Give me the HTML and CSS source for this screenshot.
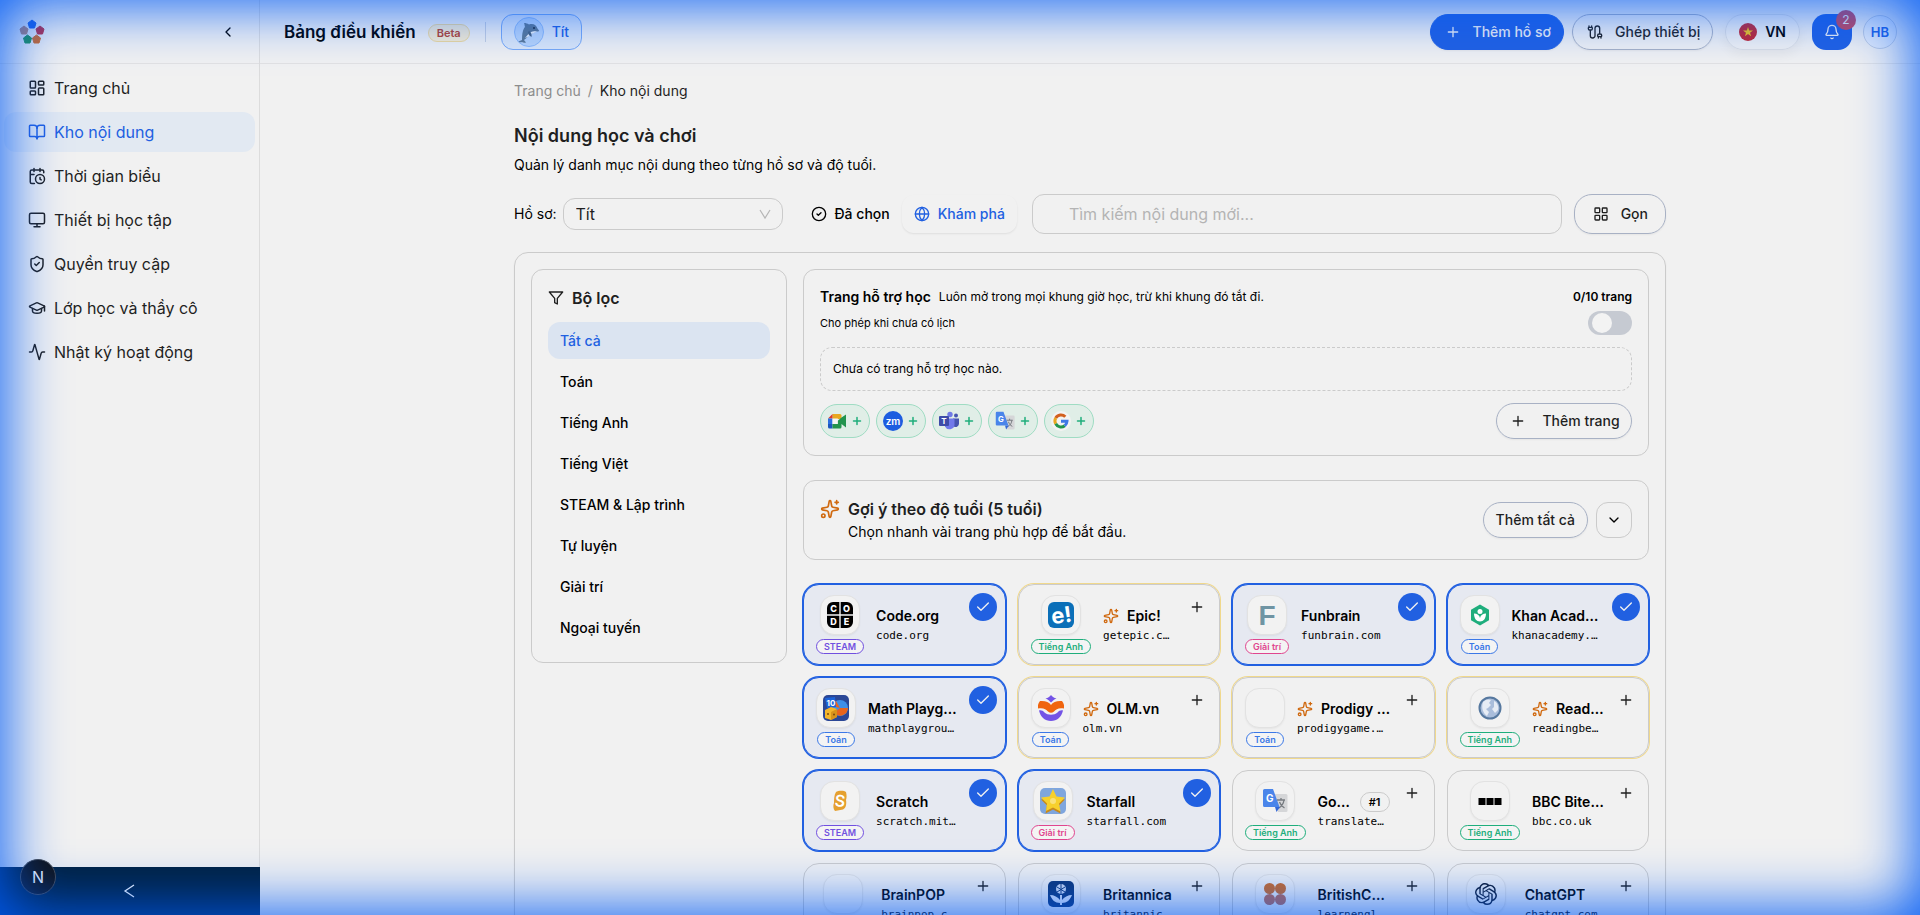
FILE: index.html
```html
<!DOCTYPE html>
<html lang="vi">
<head>
<meta charset="utf-8">
<meta name="viewport" content="width=device-width, initial-scale=1">
<title>Kho nội dung</title>
<link rel="stylesheet" href="styles.css">
</head>
<body>
<svg class="sprite" aria-hidden="true">
  <symbol id="dashboard" viewBox="0 0 24 24"><rect x="3" y="3" width="7" height="9" rx="1"/><rect x="14" y="3" width="7" height="5" rx="1"/><rect x="14" y="12" width="7" height="9" rx="1"/><rect x="3" y="16" width="7" height="5" rx="1"/></symbol>
  <symbol id="book" viewBox="0 0 24 24"><path d="M12 7v14"/><path d="M3 18a1 1 0 0 1-1-1V4a1 1 0 0 1 1-1h5a4 4 0 0 1 4 4 4 4 0 0 1 4-4h5a1 1 0 0 1 1 1v13a1 1 0 0 1-1 1h-6a3 3 0 0 0-3 3 3 3 0 0 0-3-3z"/></symbol>
  <symbol id="calendar" viewBox="0 0 24 24"><path d="M16 14v2.2l1.6 1M16 2v4M21 7.5V6a2 2 0 0 0-2-2H5a2 2 0 0 0-2 2v14a2 2 0 0 0 2 2h3.5M3 10h5M8 2v4"/><circle cx="16" cy="16" r="6"/></symbol>
  <symbol id="monitor" viewBox="0 0 24 24"><rect x="2" y="3" width="20" height="14" rx="2"/><path d="M8 21h8M12 17v4"/></symbol>
  <symbol id="shield" viewBox="0 0 24 24"><path d="M20 13c0 5-3.5 7.5-7.66 8.95a1 1 0 0 1-.67-.01C7.5 20.5 4 18 4 13V6a1 1 0 0 1 1-1c2 0 4.5-1.2 6.24-2.72a1.17 1.17 0 0 1 1.52 0C14.51 3.81 17 5 19 5a1 1 0 0 1 1 1z"/><path d="m9 12 2 2 4-4"/></symbol>
  <symbol id="cap" viewBox="0 0 24 24"><path d="M21.42 10.922a1 1 0 0 0-.019-1.838L12.83 5.18a2 2 0 0 0-1.66 0L2.6 9.08a1 1 0 0 0 0 1.832l8.57 3.908a2 2 0 0 0 1.66 0z"/><path d="M22 10v6M6 12.5V16a6 3 0 0 0 12 0v-3.5"/></symbol>
  <symbol id="activity" viewBox="0 0 24 24"><path d="M22 12h-2.48a2 2 0 0 0-1.93 1.46l-2.35 8.36a.25.25 0 0 1-.48 0L9.24 2.18a.25.25 0 0 0-.48 0l-2.35 8.36A2 2 0 0 1 4.49 12H2"/></symbol>
  <symbol id="sparkles" viewBox="0 0 24 24"><path d="M11.017 2.814a1 1 0 0 1 1.966 0l1.051 5.558a2 2 0 0 0 1.594 1.594l5.558 1.051a1 1 0 0 1 0 1.966l-5.558 1.051a2 2 0 0 0-1.594 1.594l-1.051 5.558a1 1 0 0 1-1.966 0l-1.051-5.558a2 2 0 0 0-1.594-1.594l-5.558-1.051a1 1 0 0 1 0-1.966l5.558-1.051a2 2 0 0 0 1.594-1.594zM20 2v4M22 4h-4"/><circle cx="4" cy="20" r="2"/></symbol>
  <symbol id="plus" viewBox="0 0 24 24"><path d="M5 12h14M12 5v14"/></symbol>
  <symbol id="check" viewBox="0 0 24 24"><path d="M20 6 9 17l-5-5"/></symbol>
  <symbol id="circle-check" viewBox="0 0 24 24"><circle cx="12" cy="12" r="10"/><path d="m9 12 2 2 4-4"/></symbol>
  <symbol id="globe" viewBox="0 0 24 24"><circle cx="12" cy="12" r="10"/><path d="M12 2a14.5 14.5 0 0 0 0 20 14.5 14.5 0 0 0 0-20M2 12h20"/></symbol>
  <symbol id="grid" viewBox="0 0 24 24"><rect x="3" y="3" width="7" height="7" rx="1"/><rect x="14" y="3" width="7" height="7" rx="1"/><rect x="14" y="14" width="7" height="7" rx="1"/><rect x="3" y="14" width="7" height="7" rx="1"/></symbol>
  <symbol id="funnel" viewBox="0 0 24 24"><path d="M22 3H2l8 9.46V19l4 2v-8.54z"/></symbol>
  <symbol id="down" viewBox="0 0 24 24"><path d="m6 9 6 6 6-6"/></symbol>
  <symbol id="left" viewBox="0 0 24 24"><path d="m15 18-6-6 6-6"/></symbol>
  <symbol id="bell" viewBox="0 0 24 24"><path d="M10.268 21a2 2 0 0 0 3.464 0M3.262 15.326A1 1 0 0 0 4 17h16a1 1 0 0 0 .74-1.673C19.41 13.956 18 12.499 18 8A6 6 0 0 0 6 8c0 4.499-1.411 5.956-2.738 7.326"/></symbol>
  <symbol id="cable" viewBox="0 0 24 24"><path d="M17 21v-2a1 1 0 0 1-1-1v-1a2 2 0 0 1 2-2h2a2 2 0 0 1 2 2v1a1 1 0 0 1-1 1v2M19 15V6.5a3.5 3.5 0 0 0-7 0v11a3.5 3.5 0 0 1-7 0V9M21 21v-2h-4M3 5h4V3M7 5a1 1 0 0 1 1 1v1a2 2 0 0 1-2 2H4a2 2 0 0 1-2-2V6a1 1 0 0 1 1-1V3"/></symbol>
  <symbol id="translate" viewBox="0 0 26 26"><path fill="#d5d6d8" d="M11 6h13a1.500 1.500 0 0 1 1.500 1.500v15A1.500 1.500 0 0 1 24 24h-8z"/><path d="M15 12h8M19 10v2M17 20c3-2 4.500-4 5-8M17.500 14c1 3 2.500 4.500 5 6" fill="none" stroke="#777b80" stroke-width="1.300"/><path fill="#3367d6" d="m13 19 5 0-3.500 5z"/><path fill="#4a85ea" d="M2.500 1H11l6.500 18h-15A1.500 1.500 0 0 1 1 17.500v-15A1.500 1.500 0 0 1 2.500 1z"/><text x="4" y="14" font-size="10" font-weight="700" fill="#fff">G</text></symbol>
</svg>

<div class="app">
  <aside class="sidebar">
    <div class="brand">
      <svg class="logo" viewBox="0 0 26 26"><g stroke-linejoin="round" stroke-width="1"><path fill="#2160e1" stroke="#2160e1" d="m13 1 4 3-1.500 5h-5L9 4z"/><path fill="#c02b3c" stroke="#c02b3c" d="m21 7 4 3-1.500 5h-5L17 10z"/><path fill="#d96a1e" stroke="#d96a1e" d="m17.500 16 4 3-1.500 5h-5l-1.500-5z"/><path fill="#23944e" stroke="#23944e" d="m8.500 16 4 3-1.500 5H6l-1.500-5z"/><path fill="#b9836c" stroke="#b9836c" d="m5 7 4 3-1.500 5h-5L1 10z"/></g></svg>
      <button class="plain" aria-label="Thu gọn"><svg class="icon s16"><use href="#left"/></svg></button>
    </div>
    <nav class="nav">
      <a href="#"><svg class="icon s18"><use href="#dashboard"/></svg>Trang chủ</a>
      <a href="#" class="active"><svg class="icon s18"><use href="#book"/></svg>Kho nội dung</a>
      <a href="#"><svg class="icon s18"><use href="#calendar"/></svg>Thời gian biểu</a>
      <a href="#"><svg class="icon s18"><use href="#monitor"/></svg>Thiết bị học tập</a>
      <a href="#"><svg class="icon s18"><use href="#shield"/></svg>Quyền truy cập</a>
      <a href="#"><svg class="icon s18"><use href="#cap"/></svg>Lớp học và thầy cô</a>
      <a href="#"><svg class="icon s18"><use href="#activity"/></svg>Nhật ký hoạt động</a>
    </nav>
    <button class="trigger" aria-label="Đóng thanh bên"><svg viewBox="0 0 14 14" width="14" height="14"><path d="M11 1 2 7l9 6" fill="none" stroke="#fff" stroke-width="1.300"/></svg></button>
  </aside>

  <div class="page">
    <header class="topbar">
      <h1>Bảng điều khiển</h1>
      <span class="beta">Beta</span>
      <span class="divider"></span>
      <button class="profile"><svg class="avatar" viewBox="0 0 30 30"><circle cx="15" cy="15" r="14.500" fill="#b9d4f8" stroke="#8fb9f5"/><path fill="#5c7894" d="M8 23C8 16 9 12 11 10c-.500-1.500-.500-3-1-4 2 0 3.500.500 5 1.500 4-1.500 7.500.500 8.500 4l1.500 2c0 1-1 1.200-2 1-4 1-7 3-9.500 5.500-1 1-2 2-3.500 3l2 2.500c-2 .500-3 0-4-.500-1 .500-2 .500-3.500-.500z"/><path fill="#eef3f8" d="M23 14c-2 .500-4 0-6 1s-4 3.500-6 6c3-1 4-2 6-3.500s5-2 6-3.500z"/><path fill="#47617c" d="M15 14c2 1 3 3 2.500 6-2-1-3.500-3-3.500-5z"/><circle cx="20" cy="11" r="1" fill="#1c2a3a"/></svg>Tít</button>
      <div class="actions">
        <button class="btn primary"><svg class="icon s16"><use href="#plus"/></svg>Thêm hồ sơ</button>
        <button class="btn"><svg class="icon s16"><use href="#cable"/></svg>Ghép thiết bị</button>
        <button class="lang"><svg viewBox="0 0 18 18" width="18" height="18"><circle cx="9" cy="9" r="9" fill="#c4262e"/><path fill="#f5c518" d="m9 4 1.200 3.500H14l-3 2.200 1.100 3.600L9 11.100l-3.100 2.200L7 9.700 4 7.500h3.800z"/></svg>VN</button>
        <button class="notify" aria-label="Thông báo"><svg class="icon s16"><use href="#bell"/></svg><span class="count">2</span></button>
        <button class="user">HB</button>
      </div>
    </header>

    <main class="scroll">
      <div class="content">
        <nav class="crumbs"><a href="#">Trang chủ</a><span>/</span><b>Kho nội dung</b></nav>
        <h2>Nội dung học và chơi</h2>
        <p class="lead">Quản lý danh mục nội dung theo từng hồ sơ và độ tuổi.</p>

        <div class="toolbar">
          <label for="profile">Hồ sơ:</label>
          <span class="picker"><select id="profile"><option>Tít</option></select><svg viewBox="0 0 12 12" width="12" height="12"><path d="m1 2 5 8 5-8" fill="none" stroke="#b5b5b5" stroke-width="1.200"/></svg></span>
          <div class="tabs">
            <button><svg class="icon s16"><use href="#circle-check"/></svg>Đã chọn</button>
            <button class="on"><svg class="icon s16"><use href="#globe"/></svg>Khám phá</button>
          </div>
          <input class="search" type="search" aria-label="Tìm kiếm" placeholder="Tìm kiếm nội dung mới...">
          <button class="btn tall"><svg class="icon s16"><use href="#grid"/></svg>Gọn</button>
        </div>

        <section class="panel">
          <aside class="filters">
            <h3><svg class="icon s16"><use href="#funnel"/></svg>Bộ lọc</h3>
            <button class="on">Tất cả</button>
            <button>Toán</button>
            <button>Tiếng Anh</button>
            <button>Tiếng Việt</button>
            <button>STEAM &amp; Lập trình</button>
            <button>Tự luyện</button>
            <button>Giải trí</button>
            <button>Ngoại tuyến</button>
          </aside>

          <div class="catalog">
            <section class="box support">
              <div class="line"><h4>Trang hỗ trợ học</h4><span class="hint">Luôn mở trong mọi khung giờ học, trừ khi khung đó tắt đi.</span><b class="quota">0/10 trang</b></div>
              <div class="line allow"><label for="allow">Cho phép khi chưa có lịch</label><input id="allow" class="switch" type="checkbox" role="switch"></div>
              <div class="empty">Chưa có trang hỗ trợ học nào.</div>
              <div class="chips">
                <button class="chip" aria-label="Google Meet"><svg viewBox="0 0 20 20"><path fill="#e8a820" d="M5.500 3H13a1.500 1.500 0 0 1 1.500 1.500V8H5.500z"/><path fill="#d93a2b" d="M5.500 3v4.500H1z"/><path fill="#2c6fe0" d="M1 7.500h4.500V13H1z"/><path fill="#1b57bd" d="M1 13h4.500v4.500h-3A1.500 1.500 0 0 1 1 16z"/><path fill="#23944e" d="M5.500 13h5V10l4-3.500L19 3.500v13L14.500 13v3a1.500 1.500 0 0 1-1.500 1.500H5.500z"/><path fill="#f4f4f4" d="M5.500 7.500h5.300V13H5.500z"/></svg><svg class="icon s12"><use href="#plus"/></svg></button>
                <button class="chip" aria-label="Zoom"><svg viewBox="0 0 20 20"><circle cx="10" cy="10" r="10" fill="#1c5de0"/><text x="10" y="13.500" text-anchor="middle" font-size="10" font-weight="600" fill="#fff">zm</text></svg><svg class="icon s12"><use href="#plus"/></svg></button>
                <button class="chip" aria-label="Teams"><svg viewBox="0 0 20 20"><circle cx="11" cy="3.500" r="2.700" fill="#6f7ae6"/><circle cx="17" cy="4.500" r="2" fill="#4655b0"/><path fill="#4655b0" d="M14 7.500h6V13a3.500 3.500 0 0 1-6 2z"/><path fill="#7079ea" d="M6 7.500h9.500v6a5 5 0 0 1-9.500 2z"/><rect y="5" width="10" height="10" rx="1" fill="#3d4ba8"/><text x="5" y="13" text-anchor="middle" font-size="8" font-weight="700" fill="#fff">T</text></svg><svg class="icon s12"><use href="#plus"/></svg></button>
                <button class="chip" aria-label="Google Dịch"><svg viewBox="0 0 20 20"><use href="#translate"/></svg><svg class="icon s12"><use href="#plus"/></svg></button>
                <button class="chip" aria-label="Google"><svg viewBox="0 0 20 20"><circle cx="10" cy="10" r="10" fill="#f3f3f3"/><g fill="none" stroke-width="3"><path stroke="#d2601f" d="M4.700 7A6 6 0 0 1 14.300 5.800"/><path stroke="#e8a820" d="M4.700 12.800A6 6 0 0 1 4.700 7"/><path stroke="#23944e" d="M13.700 14.700A6 6 0 0 1 4.700 12.800"/><path stroke="#3f78e6" d="M10 10.200h6A6 6 0 0 1 13.700 14.700"/></g></svg><svg class="icon s12"><use href="#plus"/></svg></button>
                <button class="btn end"><svg class="icon s16"><use href="#plus"/></svg>Thêm trang</button>
              </div>
            </section>

            <section class="box suggest">
              <svg class="icon s20 amber"><use href="#sparkles"/></svg>
              <div><h3>Gợi ý theo độ tuổi (5 tuổi)</h3><p>Chọn nhanh vài trang phù hợp để bắt đầu.</p></div>
              <button class="btn end compact">Thêm tất cả</button>
              <button class="square" aria-label="Mở rộng"><svg class="icon s16"><use href="#down"/></svg></button>
            </section>

            <div class="cards">
              <article class="card picked"><div class="side"><span class="tile"><svg viewBox="0 0 26 26"><path d="M6 0h6.300v12.300H0V6a6 6 0 0 1 6-6zM13.700 0H20a6 6 0 0 1 6 6v6.300H13.700zM0 13.700h12.300V26H6a6 6 0 0 1-6-6zM13.700 13.700H26V20a6 6 0 0 1-6 6h-6.300z"/><g fill="#fff" font-size="9" font-weight="800" text-anchor="middle"><text x="6.500" y="9.500">C</text><text x="19.500" y="9.500">O</text><text x="6.500" y="23">D</text><text x="19.500" y="23">E</text></g></svg></span><span class="tag steam">STEAM</span></div><div class="info"><h5><span>Code.org</span></h5><code>code.org</code></div><button class="pick" aria-label="Bỏ chọn"><svg class="icon s16"><use href="#check"/></svg></button></article>

              <article class="card hot"><div class="side"><span class="tile"><svg viewBox="0 0 26 26"><rect width="26" height="26" rx="6" fill="#0b6fb8"/><text x="3" y="21" font-size="22" font-weight="700" fill="#fff" transform="rotate(-8 13 13)">e!</text></svg></span><span class="tag eng">Tiếng Anh</span></div><div class="info"><h5><svg class="icon s16 amber"><use href="#sparkles"/></svg><span>Epic!</span></h5><code>getepic.com</code></div><button class="pick" aria-label="Chọn"><svg class="icon s16"><use href="#plus"/></svg></button></article>

              <article class="card picked"><div class="side"><span class="tile"><svg viewBox="0 0 26 26"><text x="13" y="23" text-anchor="middle" font-family="Liberation Sans" font-size="28" font-weight="700" fill="#6f94a3">F</text></svg></span><span class="tag fun">Giải trí</span></div><div class="info"><h5><span>Funbrain</span></h5><code>funbrain.com</code></div><button class="pick" aria-label="Bỏ chọn"><svg class="icon s16"><use href="#check"/></svg></button></article>

              <article class="card picked"><div class="side"><span class="tile"><svg viewBox="0 0 26 26"><path fill="#1fae7c" d="m13 2.500 9 5.200v10.600l-9 5.200-9-5.200V7.700z"/><circle cx="13" cy="9.500" r="2.500" fill="#fff"/><path fill="#fff" d="M7 11.500c3 0 5.500 1.500 6 4.500.500-3 3-4.500 6-4.500 0 5-2.500 8-6 8s-6-3-6-8z"/></svg></span><span class="tag math">Toán</span></div><div class="info"><h5><span>Khan Academy</span></h5><code>khanacademy.org</code></div><button class="pick" aria-label="Bỏ chọn"><svg class="icon s16"><use href="#check"/></svg></button></article>

              <article class="card picked"><div class="side"><span class="tile"><svg viewBox="0 0 26 26"><rect width="26" height="26" rx="5" fill="#2b4796"/><circle cx="17" cy="13" r="8" fill="#3f8fe8"/><path fill="#e8641c" d="M17 13h8a8 8 0 0 1-14 5zM17 13 9.500 11A8 8 0 0 1 13 6z"/><path fill="#1c63d8" d="m2 3 10-1 1 10-9 1z"/><text x="3.500" y="10.500" font-size="8" font-weight="700" fill="#fff">10</text><path fill="#f3b52b" d="m2 15 6-3 6 2v8l-6 3-6-2z"/><path fill="#d8931a" d="m8 17 6-3v8l-6 3z"/><circle cx="5" cy="19" r="1" fill="#7a4b10"/><circle cx="11" cy="19.500" r="1" fill="#7a4b10"/></svg></span><span class="tag math">Toán</span></div><div class="info"><h5><span>Math Playground</span></h5><code>mathplayground.com</code></div><button class="pick" aria-label="Bỏ chọn"><svg class="icon s16"><use href="#check"/></svg></button></article>

              <article class="card hot"><div class="side"><span class="tile"><svg viewBox="0 0 26 26"><path fill="#7353e6" d="M13 0c1.500 2 3 3 5.500 3.500C16 4.500 14.500 6 13 7.500 11.500 6 10 4.500 7.500 3.500 10 3 11.500 2 13 0zM1 15.500c2.500-.500 4 .500 5.500 2 3.500 3 9.500 3 13 0 1.500-1.500 3-2.500 5.500-2C23.500 22 19 26 13 26S2.500 22 1 15.500z"/><path fill="#f0650f" d="M2 6c5-.500 9 1 11 4 2-3 6-4.500 11-4 2 2.500 2.500 5 2 7.500-5-1-8 .500-10 3q-3 2.500-6 0c-2-2.500-5-4-10-3C-.500 11 0 8.500 2 6z"/></svg></span><span class="tag math">Toán</span></div><div class="info"><h5><svg class="icon s16 amber"><use href="#sparkles"/></svg><span>OLM.vn</span></h5><code>olm.vn</code></div><button class="pick" aria-label="Chọn"><svg class="icon s16"><use href="#plus"/></svg></button></article>

              <article class="card hot"><div class="side"><span class="tile"></span><span class="tag math">Toán</span></div><div class="info"><h5><svg class="icon s16 amber"><use href="#sparkles"/></svg><span>Prodigy Math</span></h5><code>prodigygame.com</code></div><button class="pick" aria-label="Chọn"><svg class="icon s16"><use href="#plus"/></svg></button></article>

              <article class="card hot"><div class="side"><span class="tile"><svg viewBox="0 0 26 26"><circle cx="13" cy="13" r="10.500" fill="#a9bddb" stroke="#56789f" stroke-width="2"/><path fill="#e6ecf5" d="M6 7c3-3 6-3 8-2l-2 3 2 2-3 3-2 1 3 3-2 4c-4-3-6-8-4-14zM17 6c3 1 5 5 4 9l-3 3-3-4 2-2z"/></svg></span><span class="tag eng">Tiếng Anh</span></div><div class="info"><h5><svg class="icon s16 amber"><use href="#sparkles"/></svg><span>Reading Bear</span></h5><code>readingbear.org</code></div><button class="pick" aria-label="Chọn"><svg class="icon s16"><use href="#plus"/></svg></button></article>

              <article class="card picked"><div class="side"><span class="tile"><svg viewBox="0 0 26 26"><path fill="#e5a02f" d="M9 4c2-1.500 8-2 10 0 .800 3 .800 6 0 8 .700 4 0 8-3 9.500L8 23c-2-2-2-6-1-8 0-3 0-8 2-11z"/><text x="13" y="18.500" text-anchor="middle" font-size="16" font-weight="600" fill="#fff" transform="rotate(6 13 13)">S</text></svg></span><span class="tag steam">STEAM</span></div><div class="info"><h5><span>Scratch</span></h5><code>scratch.mit.edu</code></div><button class="pick" aria-label="Bỏ chọn"><svg class="icon s16"><use href="#check"/></svg></button></article>

              <article class="card picked"><div class="side"><span class="tile"><svg viewBox="0 0 26 26"><rect width="26" height="26" rx="5" fill="#7fa6de"/><path fill="#c98a1c" d="m13 3 3.500 7.500 8.500 1-6 6 1.500 8-7.500-4-7.500 4 1.500-8-6-6 8.500-1z"/><path fill="#f7d02c" d="m13 1 3.500 7.500 8.500 1-6 6 1.500 8-7.500-4-7 3.500 1-7.500-6-6 8.500-1z"/><circle cx="13" cy="13" r="3" fill="#fae27a"/></svg></span><span class="tag fun">Giải trí</span></div><div class="info"><h5><span>Starfall</span></h5><code>starfall.com</code></div><button class="pick" aria-label="Bỏ chọn"><svg class="icon s16"><use href="#check"/></svg></button></article>

              <article class="card"><div class="side"><span class="tile"><svg viewBox="0 0 26 26"><use href="#translate"/></svg></span><span class="tag eng">Tiếng Anh</span></div><div class="info"><h5><span>Google Dịch</span><small>#1</small></h5><code>translate.google.com</code></div><button class="pick" aria-label="Chọn"><svg class="icon s16"><use href="#plus"/></svg></button></article>

              <article class="card"><div class="side"><span class="tile"><svg viewBox="0 0 26 26"><path d="M1.500 10h7v7h-7zM9.500 10h7v7h-7zM17.500 10h7v7h-7z"/></svg></span><span class="tag eng">Tiếng Anh</span></div><div class="info"><h5><span>BBC Bitesize</span></h5><code>bbc.co.uk</code></div><button class="pick" aria-label="Chọn"><svg class="icon s16"><use href="#plus"/></svg></button></article>

              <article class="card"><div class="side"><span class="tile"></span><span class="tag math">Tự luyện</span></div><div class="info"><h5><span>BrainPOP</span></h5><code>brainpop.com</code></div><button class="pick" aria-label="Chọn"><svg class="icon s16"><use href="#plus"/></svg></button></article>

              <article class="card"><div class="side"><span class="tile"><svg viewBox="0 0 26 26"><rect width="26" height="26" rx="5" fill="#0e3573"/><circle cx="13" cy="8" r="5" fill="#d5def0"/><path stroke="#0e3573" d="m9 6 8 5m0-5-8 5m4-8v10"/><path fill="#e4ebf7" d="M12 14h2v10h-2zM12 22c-5 0-8-3-10-8 4 0 8 2 10 5zM14 22c5 0 8-3 10-8-4 0-8 2-10 5z"/></svg></span><span class="tag eng">Tiếng Anh</span></div><div class="info"><h5><span>Britannica</span></h5><code>britannica.com</code></div><button class="pick" aria-label="Chọn"><svg class="icon s16"><use href="#plus"/></svg></button></article>

              <article class="card"><div class="side"><span class="tile"><svg viewBox="0 0 26 26"><g fill="#d2691e"><circle cx="7.500" cy="7.500" r="5.500"/><circle cx="18.500" cy="7.500" r="5.500"/></g><g fill="#c2674a"><circle cx="7.500" cy="18.500" r="5.500"/><circle cx="18.500" cy="18.500" r="5.500"/></g></svg></span><span class="tag eng">Tiếng Anh</span></div><div class="info"><h5><span>BritishCouncil</span></h5><code>learnenglishkids.org</code></div><button class="pick" aria-label="Chọn"><svg class="icon s16"><use href="#plus"/></svg></button></article>

              <article class="card"><div class="side"><span class="tile"><svg class="slim" viewBox="0 0 24 24"><path fill="#111a2c" d="M22.282 9.821a5.985 5.985 0 0 0-.516-4.910 6.046 6.046 0 0 0-6.510-2.900A6.065 6.065 0 0 0 4.981 4.182a5.985 5.985 0 0 0-3.998 2.900 6.046 6.046 0 0 0 .743 7.097 5.980 5.980 0 0 0 .510 4.911 6.051 6.051 0 0 0 6.515 2.900A5.985 5.985 0 0 0 13.260 24a6.056 6.056 0 0 0 5.772-4.206 5.990 5.990 0 0 0 3.998-2.900 6.056 6.056 0 0 0-.748-7.073zM13.260 22.430a4.476 4.476 0 0 1-2.876-1.040l.141-.081 4.779-2.758a.795.795 0 0 0 .393-.681v-6.737l2.020 1.169a.071.071 0 0 1 .038.052v5.583a4.504 4.504 0 0 1-4.495 4.493zM3.600 18.304a4.471 4.471 0 0 1-.535-3.014l.142.085 4.783 2.759a.771.771 0 0 0 .781 0l5.843-3.369v2.332a.080.080 0 0 1-.033.062L9.740 19.950a4.499 4.499 0 0 1-6.140-1.646zM2.341 7.896a4.485 4.485 0 0 1 2.366-1.973V11.600a.766.766 0 0 0 .388.677l5.815 3.354-2.020 1.169a.076.076 0 0 1-.071 0l-4.830-2.787A4.504 4.504 0 0 1 2.341 7.872zm16.597 3.855-5.833-3.387L15.119 7.200a.076.076 0 0 1 .071 0l4.830 2.791a4.494 4.494 0 0 1-.676 8.105v-5.678a.790.790 0 0 0-.407-.667zm2.010-3.023-.141-.085-4.774-2.782a.776.776 0 0 0-.785 0L9.409 9.230V6.897a.066.066 0 0 1 .028-.061l4.830-2.787a4.499 4.499 0 0 1 6.680 4.660zm-12.640 4.135-2.020-1.164a.080.080 0 0 1-.038-.057V6.074a4.499 4.499 0 0 1 7.376-3.454l-.142.081-4.778 2.758a.795.795 0 0 0-.393.681zm1.097-2.365 2.602-1.500 2.607 1.500v3l-2.597 1.500-2.607-1.500z"/></svg></span><span class="tag math">Tự luyện</span></div><div class="info"><h5><span>ChatGPT</span></h5><code>chatgpt.com</code></div><button class="pick" aria-label="Chọn"><svg class="icon s16"><use href="#plus"/></svg></button></article>
            </div>
          </div>
        </section>
      </div>
    </main>
  </div>
</div>
<button class="dev" aria-label="Công cụ">N</button>
<div class="glow"></div>
</body>
</html>
```
FILE: styles.css
```css
:root {
  --blue: #2160e1;
  --line: #cbcbcb;
  --steel: #a8b1c4;
  --bg: #f1f1f1;
}

* { box-sizing: border-box; }

body {
  margin: 0;
  background: var(--bg);
  color: #000;
  font: 14px/20px Inter, "Noto Sans", sans-serif;
}

h1, h2, h3, h4, h5, p { margin: 0; }
button, input, select { font: inherit; color: inherit; }
button { padding: 0; border: 0; background: none; cursor: pointer; }
a { color: inherit; text-decoration: none; }

.sprite { display: none; }
.icon { flex: none; fill: none; stroke: currentColor; stroke-width: 2; stroke-linecap: round; stroke-linejoin: round; }
.s12 { width: 12px; height: 12px; }
.s16 { width: 16px; height: 16px; }
.s18 { width: 18px; height: 18px; }
.s20 { width: 20px; height: 20px; }
.amber { color: #d0690f; }

.app { display: flex; height: 100vh; overflow: hidden; }

/* Sidebar */
.sidebar { flex: 0 0 260px; display: flex; flex-direction: column; border-right: 1px solid #dcdcdc; }
.brand { display: flex; align-items: center; justify-content: space-between; height: 64px; padding: 0 21px 0 19px; border-bottom: 1px solid #e2e2e2; }
.brand .plain { display: flex; padding: 2px; }
.logo { width: 26px; height: 26px; }
.nav { flex: 1; display: flex; flex-direction: column; gap: 4px; padding: 4px; }
.nav a { display: flex; align-items: center; gap: 8px; height: 40px; padding: 0 24px; border-radius: 12px; color: #1f1f1f; font-size: 16px; }
.nav .active { background: #e2e9f2; color: var(--blue); }
.trigger { display: flex; align-items: center; justify-content: center; height: 48px; margin-right: -1px; background: #002140; }

/* Top bar */
.page { flex: 1; min-width: 0; display: flex; flex-direction: column; }
.topbar { flex: none; display: flex; align-items: center; height: 64px; padding: 0 23px 0 24px; border-bottom: 1px solid #e2e2e2; }
.topbar h1 { font-size: 17px; line-height: 24px; font-weight: 600; }
.beta { margin: 2px 15px 0 12px; padding: 0 8px; border: 1px solid #f0d99a; border-radius: 9px; background: #f6ecd2; color: #b5402a; font-size: 11px; line-height: 16px; font-weight: 600; }
.divider { width: 1px; height: 20px; margin-right: 15px; background: #c5cede; }
.profile { display: flex; align-items: center; gap: 8px; height: 36px; padding: 0 12px; border: 1px solid #79a9f3; border-radius: 12px; background: #dce7f6; color: var(--blue); font-weight: 500; }
.avatar { width: 30px; height: 30px; }
.actions { display: flex; align-items: center; gap: 8px; margin-left: auto; }

.btn { display: flex; align-items: center; justify-content: center; gap: 12px; height: 36px; padding: 0 12px 0 14px; border: 1px solid var(--steel); border-radius: 18px; color: #1f1f1f; font-weight: 500; white-space: nowrap; box-shadow: 0 1px 2px #0000000d; }
.btn.primary { border-color: var(--blue); background: var(--blue); color: #f1f1f1; }
.btn.tall { height: 40px; padding: 0 17px 0 18px; }
.btn.compact { padding: 0 12px; }
.end { margin-left: auto; }
.lang { display: flex; align-items: center; gap: 8px; height: 36px; margin: 0 4px; padding: 0 13px; border: 1px solid #dcdee2; border-radius: 18px; font-weight: 600; box-shadow: 0 4px 12px #0000000d; }
.notify { position: relative; display: flex; align-items: center; justify-content: center; width: 40px; height: 36px; border-radius: 14px; background: var(--blue); color: #f1f1f1; }
.count { position: absolute; top: -4px; right: -4px; width: 20px; border-radius: 10px; background: #c94558; font-size: 12px; line-height: 20px; }
.user { width: 34px; height: 34px; margin-left: 3px; border: 1px solid #c2cde0; border-radius: 50%; background: #e6edf8; color: var(--blue); font-size: 13px; font-weight: 600; }

/* Content */
.scroll { flex: 1; min-height: 0; overflow-y: auto; scrollbar-width: none; }
.content { max-width: 1200px; margin: 0 auto; padding: 16px 24px; }
.crumbs { display: flex; gap: 7px; line-height: 22px; color: #8c8c8c; }
.crumbs b { color: #1f1f1f; font-weight: 400; }
.content h2 { margin-top: 20px; color: #1f1f1f; font-size: 18px; line-height: 28px; font-weight: 600; }
.lead { margin-top: 5px; }

.toolbar { display: flex; align-items: center; margin-top: 19px; }
.picker { position: relative; flex: 0 0 220px; margin: 0 16px 0 6px; }
.picker select { display: block; width: 100%; height: 32px; padding: 0 12px; border: 1px solid var(--line); border-radius: 12px; background: none; color: #1f1f1f; font-size: 16px; appearance: none; }
.picker svg { position: absolute; top: 10px; right: 12px; pointer-events: none; }
.tabs { display: flex; }
.tabs button { display: flex; align-items: center; gap: 8px; height: 38px; padding: 0 12px; border-radius: 12px; font-weight: 500; white-space: nowrap; }
.tabs .on { color: var(--blue); box-shadow: 0 1px 2px #00000014; }
.search { flex: 1; min-width: 0; height: 40px; margin: 0 12px 0 15px; padding: 0 36px; border: 1px solid var(--line); border-radius: 12px; background: none; font-size: 16px; }
.search::placeholder { color: #b4b4b4; }

.panel { display: grid; grid-template-columns: 256px minmax(0, 1fr); align-items: start; gap: 16px; margin-top: 18px; padding: 16px; border: 1px solid var(--line); border-radius: 14px; box-shadow: 0 1px 2px #0000000d; }
.filters, .box { border: 1px solid var(--line); border-radius: 12px; }
.filters { display: flex; flex-direction: column; gap: 4px; padding: 16px; }
.filters h3 { display: flex; align-items: center; gap: 8px; margin-bottom: 8px; }
h3 { color: #1f1f1f; font-size: 16px; line-height: 24px; font-weight: 600; }
.filters button { height: 37px; padding: 0 12px; border-radius: 12px; font-weight: 500; text-align: left; }
.filters .on { background: #dbe4f1; color: var(--blue); }

.catalog { display: grid; gap: 24px; }
.box { padding: 16px; }
.line { display: flex; align-items: center; gap: 8px; }
.line h4 { font-size: 14px; line-height: 22px; font-weight: 600; }
.hint, .quota { font-size: 12px; }
.quota { margin-left: auto; font-weight: 600; }
.allow { justify-content: space-between; margin-top: 3px; font-size: 11px; }
.switch { appearance: none; flex: none; display: flex; align-items: center; width: 44px; height: 24px; margin: 0; padding: 0 4px; border-radius: 12px; background: #c6cad2; }
.switch::before { content: ""; width: 20px; height: 20px; border-radius: 50%; background: #f3f3f3; }
.empty { margin-top: 12px; padding: 11px 12px; border: 1px dashed var(--line); border-radius: 12px; font-size: 12px; }
.chips { display: flex; align-items: center; gap: 6px; margin-top: 12px; }
.chip { display: flex; align-items: center; gap: 4px; height: 34px; padding: 0 6px; border: 1px solid #9fdcc3; border-radius: 17px; background: #e0eee7; color: #1fae7c; }
.chip svg:first-child { width: 20px; height: 20px; }
.chip .s12 { stroke-width: 3; }
.chips .end { width: 136px; gap: 16px; }

.suggest { display: flex; align-items: center; gap: 8px; }
.suggest > .icon { align-self: flex-start; margin-top: 2px; }
.suggest p { line-height: 22px; }
.square { display: flex; align-items: center; justify-content: center; width: 36px; height: 36px; border: 1px solid var(--line); border-radius: 12px; }

/* Catalog cards */
.cards { display: grid; grid-template-columns: repeat(4, minmax(0, 1fr)); gap: 12px; }
.card { position: relative; display: flex; align-items: center; gap: 12px; padding: 10px 41px 10px 12px; border: 1px solid var(--line); border-radius: 16px; }
.picked { padding-right: 46px; border-color: var(--blue); background: #e6e9f1; box-shadow: 0 0 0 1px var(--blue); }
.hot { box-shadow: 0 0 0 1px #f0d88c; }
.side { flex: none; display: flex; flex-direction: column; align-items: center; gap: 4px; }
.tile { display: flex; align-items: center; justify-content: center; width: 40px; height: 40px; border: 1px solid #e2e2e2; border-radius: 14px; background: #f2f2f2; box-shadow: 0 1px 2px #0000000d; }
.tile svg { width: 26px; height: 26px; }
.tile .slim { width: 22px; height: 22px; }
.tag { padding: 0 7px; border: 1px solid; border-radius: 8px; background: #f4f4f4; font-size: 9px; line-height: 13px; font-weight: 600; white-space: nowrap; }
.steam { color: #7150e0; }
.eng { color: #1fae7c; }
.fun { color: #e0468f; }
.math { color: #3b78e7; }
.info { flex: 1; min-width: 0; }
.info h5 { display: flex; align-items: center; gap: 8px; font-size: 14px; line-height: 22px; font-weight: 600; }
.info h5 span, .info code { overflow: hidden; text-overflow: ellipsis; white-space: nowrap; }
.info h5 small { flex: none; margin: 0 3px 0 auto; padding: 0 8px; border: 1px solid var(--line); border-radius: 10px; font-size: 11px; line-height: 18px; }
.info code { display: block; margin-right: 3px; font: 11px/18px "DejaVu Sans Mono", monospace; }
.picked code { margin-right: 0; }
.pick { position: absolute; top: 8px; right: 8px; display: flex; align-items: center; justify-content: center; width: 28px; height: 28px; border-radius: 50%; color: #1f1f1f; }
.picked .pick { background: var(--blue); color: #f1f1f1; }

/* Overlays */
.dev { position: fixed; bottom: 20px; left: 20px; width: 36px; height: 36px; border: 1px solid #4a4a4a; border-radius: 50%; background: #101010; color: #fff; font-size: 16px; }
.glow { position: fixed; inset: 0; box-shadow: inset 0 0 60px 4px #005bf5; pointer-events: none; }
```
